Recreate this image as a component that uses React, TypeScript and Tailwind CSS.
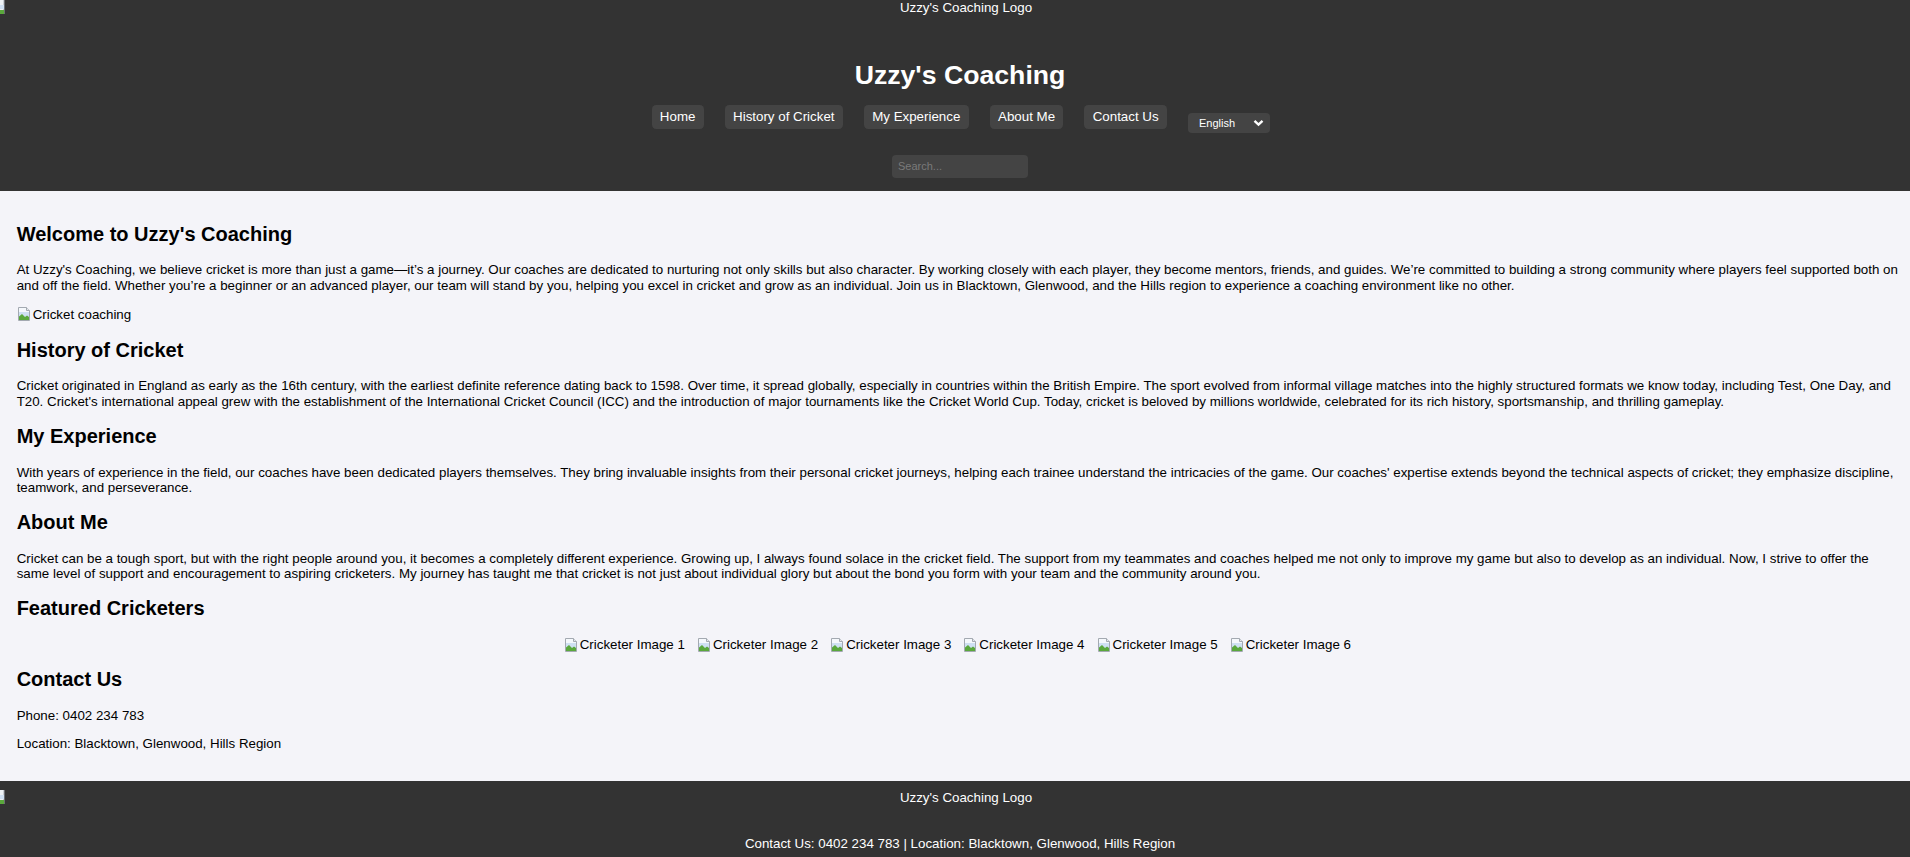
const BrokenImg = () => (
  <svg width="16" height="16" viewBox="0 0 16 16" className="inline-block shrink-0 align-[-3px]">
    <path d="M1.5 1.5h8l3 3v10h-11z" fill="#f5f8fc" stroke="#a3a9b1" />
    <path d="M9.5 1.5v3h3" fill="#e4e7eb" stroke="#a3a9b1" />
    <path d="M2 6h10v5H2z" fill="#cfe0f2" />
    <path d="M2 14V10.5l3-2.5 3 3 2-1.5 2 1.5V14z" fill="#5aa83c" />
  </svg>
);

const LogoRow = ({ height }: { height: string }) => (
  <div className={`flex ${height}`}>
    <div className="w-[16px] shrink-0">
      <svg width="5" height="14" viewBox="0 0 5 14">
        <path d="M0 0h4v14H0z" fill="#eef2f6" />
        <path d="M4 0v14" stroke="#a3a9b1" />
        <path d="M0 5h4v4H0z" fill="#cfe0f2" />
        <path d="M0 10h4v4H0z" fill="#5aa83c" />
      </svg>
    </div>
    <div className="flex-1 pl-[6px] text-center leading-[15.33px]">Uzzy's Coaching Logo</div>
  </div>
);

const navLinks = ["Home", "History of Cricket", "My Experience", "About Me", "Contact Us"];
const cricketers = [1, 2, 3, 4, 5, 6];

const H2 = ({ children, top = "mt-[16px]" }: { children: React.ReactNode; top?: string }) => (
  <h2 className={`mb-[16.6px] ${top} text-[20px] font-bold leading-[23px]`}>{children}</h2>
);

const P = ({ children }: { children: React.ReactNode }) => (
  <p className="my-[13.33px] leading-[15.33px]">{children}</p>
);

export default function App() {
  return (
    <div className="min-h-screen bg-[#f4f4f9] font-['Liberation_Sans',Arial,sans-serif] text-[13.33px] text-black">
      <header className="bg-[#333] text-white">
        <LogoRow height="h-[41.7px]" />
        <h1 className="mt-[18px] pl-[10px] text-center text-[26.67px] font-bold leading-[30.7px]">
          Uzzy's Coaching
        </h1>
        <nav className="mt-[14.7px] flex items-start justify-center gap-[21px] pl-[11.5px]">
          {navLinks.map((link) => (
            <a
              key={link}
              href="#"
              className="rounded-[4.17px] bg-[#444] px-[8.33px] py-[4.17px] leading-[15.33px] text-white"
            >
              {link}
            </a>
          ))}
          <div className="mt-[8px] flex h-[20px] w-[82px] items-center justify-between rounded-[4px] bg-[#444] pl-[11px] pr-[6px] text-[11px]">
            <span>English</span>
            <svg width="11" height="8" viewBox="0 0 11 8">
              <path d="M1.5 1.8l4 3.8 4-3.8" fill="none" stroke="#fff" strokeWidth="2.4" />
            </svg>
          </div>
        </nav>
        <div className="mt-[22px] flex justify-center pb-[13px] pl-[10px]">
          <div className="flex h-[22.7px] w-[136px] items-center rounded-[4px] bg-[#444] pl-[6px] text-[11px] text-[#7a7a7a]">
            Search...
          </div>
        </div>
      </header>

      <main className="pb-[16px] pl-[16.67px] pr-[12px] pt-[16px]">
        <section>
          <H2>Welcome to Uzzy's Coaching</H2>
          <P>
            At Uzzy's Coaching, we believe cricket is more than just a game—it’s a journey. Our coaches are
            dedicated to nurturing not only skills but also character. By working closely with each player, they
            become mentors, friends, and guides. We’re committed to building a strong community where players feel
            supported both on and off the field. Whether you’re a beginner or an advanced player, our team will stand
            by you, helping you excel in cricket and grow as an individual. Join us in Blacktown, Glenwood, and the
            Hills region to experience a coaching environment like no other.
          </P>
          <div className="leading-[15.33px]">
            <BrokenImg />
            Cricket coaching
          </div>
        </section>

        <section>
          <H2>History of Cricket</H2>
          <P>
            Cricket originated in England as early as the 16th century, with the earliest definite reference dating
            back to 1598. Over time, it spread globally, especially in countries within the British Empire. The sport
            evolved from informal village matches into the highly structured formats we know today, including Test,
            One Day, and T20. Cricket's international appeal grew with the establishment of the International Cricket
            Council (ICC) and the introduction of major tournaments like the Cricket World Cup. Today, cricket is
            beloved by millions worldwide, celebrated for its rich history, sportsmanship, and thrilling gameplay.
          </P>
        </section>

        <section>
          <H2>My Experience</H2>
          <P>
            With years of experience in the field, our coaches have been dedicated players themselves. They bring
            invaluable insights from their personal cricket journeys, helping each trainee understand the intricacies
            of the game. Our coaches' expertise extends beyond the technical aspects of cricket; they emphasize
            discipline, teamwork, and perseverance.
          </P>
        </section>

        <section>
          <H2>About Me</H2>
          <P>
            Cricket can be a tough sport, but with the right people around you, it becomes a completely different
            experience. Growing up, I always found solace in the cricket field. The support from my teammates and
            coaches helped me not only to improve my game but also to develop as an individual. Now, I strive to
            offer the same level of support and encouragement to aspiring cricketers. My journey has taught me that
            cricket is not just about individual glory but about the bond you form with your team and the community
            around you.
          </P>
        </section>

        <section>
          <H2>Featured Cricketers</H2>
          <div className="flex justify-center gap-[12px] leading-[15.33px]">
            {cricketers.map((n) => (
              <div key={n} className="flex items-center">
                <BrokenImg />
                <span>Cricketer Image {n}</span>
              </div>
            ))}
          </div>
        </section>

        <section>
          <H2 top="mt-[15px]">Contact Us</H2>
          <P>Phone: 0402 234 783</P>
          <P>Location: Blacktown, Glenwood, Hills Region</P>
        </section>
      </main>

      <footer className="bg-[#333] pb-[14px] pt-[9px] text-white">
        <LogoRow height="h-[46px]" />
        <p className="pl-[10px] text-center leading-[15.33px]">
          Contact Us: 0402 234 783 | Location: Blacktown, Glenwood, Hills Region
        </p>
      </footer>
    </div>
  );
}
